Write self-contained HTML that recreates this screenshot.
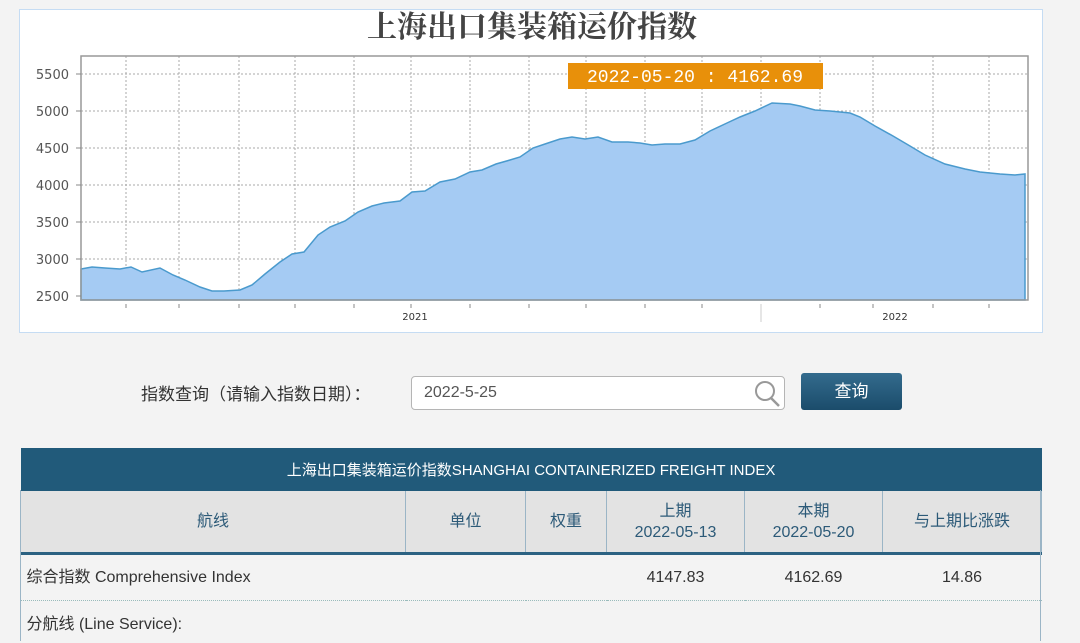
<!DOCTYPE html>
<html><head><meta charset="utf-8"><style>
body{margin:0;width:1080px;height:641px;background:#f3f3f3;overflow:hidden;font-family:"Liberation Sans","Noto Sans CJK SC",sans-serif;color:#333;position:relative}
.abs{position:absolute}
.chart{left:19px;top:9px;width:1022px;height:322px;background:#fff;border:1px solid #c5dcf3}
.lbl{font-size:17px;color:#333;left:141px;top:380px}
.inp{left:411px;top:376px;width:372px;height:32px;border:1px solid #b5b5b5;border-radius:4px;background:#fff;font-size:16px;color:#555;line-height:32px;text-indent:12px}
.btn{left:801px;top:373px;width:101px;height:37px;border-radius:3px;background:linear-gradient(#336b8d,#1b4c6b);color:#fff;font-size:17px;text-align:center;line-height:37px}
table{position:absolute;left:20px;top:448px;width:1021px;border-collapse:collapse;font-size:16px;table-layout:fixed}
td{padding:0;vertical-align:middle}
.th1{background:#215a7a;color:#fff;height:43px;text-align:center;font-size:15px}
.th2 td{background:#e3e3e3;height:61px;text-align:center;border-left:1px solid #9bb5c6;border-bottom:3px solid #2c6282;color:#2c5a78;line-height:21px}
.r td{height:45px;border-bottom:1px dotted #9bb;line-height:20px}
</style></head><body>
<div class="abs chart"></div>
<svg class="abs" style="left:0;top:0" width="1080" height="332">
<text x="532" y="37" text-anchor="middle" font-family="Noto Serif CJK SC,serif" font-size="30" font-weight="bold" fill="#444">上海出口集装箱运价指数</text>
<g stroke="#aaa" stroke-dasharray="2,2" stroke-width="1">
<line x1="81" x2="1028" y1="74" y2="74"/><line x1="81" x2="1028" y1="111" y2="111"/><line x1="81" x2="1028" y1="148" y2="148"/><line x1="81" x2="1028" y1="185" y2="185"/><line x1="81" x2="1028" y1="222" y2="222"/><line x1="81" x2="1028" y1="259" y2="259"/>
<line x1="126" x2="126" y1="56" y2="300"/><line x1="179" x2="179" y1="56" y2="300"/><line x1="239" x2="239" y1="56" y2="300"/><line x1="295" x2="295" y1="56" y2="300"/><line x1="354" x2="354" y1="56" y2="300"/><line x1="411" x2="411" y1="56" y2="300"/><line x1="470" x2="470" y1="56" y2="300"/><line x1="529" x2="529" y1="56" y2="300"/><line x1="586" x2="586" y1="56" y2="300"/><line x1="645" x2="645" y1="56" y2="300"/><line x1="702" x2="702" y1="56" y2="300"/><line x1="761" x2="761" y1="56" y2="300"/><line x1="820" x2="820" y1="56" y2="300"/><line x1="873" x2="873" y1="56" y2="300"/><line x1="933" x2="933" y1="56" y2="300"/><line x1="989" x2="989" y1="56" y2="300"/>
</g>
<polygon fill="#a5cbf3" stroke="#4a9acd" stroke-width="1.5" points="81,269 92,267 105,268 120,269 131,267 142,272 160,268 173,275 185,280 200,287 212,291 224,291 240,290 252,285 265,274 280,262 292,254 304,252 318,235 330,227 345,221 358,212 372,206 384,203 400,201 412,192 425,191 440,182 455,179 470,172 482,170 496,164 510,160 520,157 533,148 545,144 560,139 572,137 585,139 598,137 612,142 628,142 640,143 652,145 665,144 680,144 695,140 710,131 727,123 740,117 755,111 772,103 790,104 800,106 815,110 830,111 850,113 860,117 875,126 893,136 910,146 925,155 945,164 965,169 980,172 1000,174 1015,175 1025,174 1025,300 81,300"/>
<rect x="81" y="56" width="947" height="244" fill="none" stroke="#999" stroke-width="1.5"/>
<g stroke="#888"><line x1="76" x2="81" y1="74" y2="74"/><line x1="76" x2="81" y1="111" y2="111"/><line x1="76" x2="81" y1="148" y2="148"/><line x1="76" x2="81" y1="185" y2="185"/><line x1="76" x2="81" y1="222" y2="222"/><line x1="76" x2="81" y1="259" y2="259"/><line x1="76" x2="81" y1="296" y2="296"/>
<line x1="126" x2="126" y1="304" y2="308"/><line x1="179" x2="179" y1="304" y2="308"/><line x1="239" x2="239" y1="304" y2="308"/><line x1="295" x2="295" y1="304" y2="308"/><line x1="354" x2="354" y1="304" y2="308"/><line x1="411" x2="411" y1="304" y2="308"/><line x1="470" x2="470" y1="304" y2="308"/><line x1="529" x2="529" y1="304" y2="308"/><line x1="586" x2="586" y1="304" y2="308"/><line x1="645" x2="645" y1="304" y2="308"/><line x1="702" x2="702" y1="304" y2="308"/><line x1="761" x2="761" y1="304" y2="322" stroke="#ccc"/><line x1="820" x2="820" y1="304" y2="308"/><line x1="873" x2="873" y1="304" y2="308"/><line x1="933" x2="933" y1="304" y2="308"/><line x1="989" x2="989" y1="304" y2="308"/></g>
<g font-family="DejaVu Sans,sans-serif" font-size="13" fill="#555" text-anchor="end"><text x="69" y="79">5500</text><text x="69" y="116">5000</text><text x="69" y="153">4500</text><text x="69" y="190">4000</text><text x="69" y="227">3500</text><text x="69" y="264">3000</text><text x="69" y="301">2500</text></g>
<g font-family="DejaVu Sans,sans-serif" font-size="10" fill="#333" text-anchor="middle"><text x="415" y="320">2021</text><text x="895" y="320">2022</text></g>
<rect x="568" y="63" width="255" height="26" fill="#e8900a"/>
<text x="695" y="82" text-anchor="middle" font-family="Liberation Mono,monospace" font-size="18" fill="#fff">2022-05-20 : 4162.69</text>
</svg>
<div class="abs lbl">指数查询（请输入指数日期）：</div>
<div class="abs inp">2022-5-25</div>
<svg class="abs" style="left:751px;top:378px" width="32" height="30"><circle cx="14" cy="13" r="9" fill="none" stroke="#999" stroke-width="2"/><line x1="20" y1="20" x2="28" y2="28" stroke="#999" stroke-width="2.5"/></svg>
<div class="abs btn">查询</div>
<table>
<colgroup><col style="width:385px"><col style="width:120px"><col style="width:81px"><col style="width:138px"><col style="width:138px"><col style="width:159px"></colgroup>
<tr><td class="th1" colspan="6">上海出口集装箱运价指数SHANGHAI CONTAINERIZED FREIGHT INDEX</td></tr>
<tr class="th2"><td>航线</td><td>单位</td><td>权重</td><td>上期<br>2022-05-13</td><td>本期<br>2022-05-20</td><td style="border-right:1px solid #9bb5c6">与上期比涨跌</td></tr>
<tr class="r"><td style="padding-left:6px">综合指数 Comprehensive Index</td><td></td><td></td><td style="text-align:center">4147.83</td><td style="text-align:center">4162.69</td><td style="text-align:center">14.86</td></tr>
<tr><td style="padding-left:6px;height:42px">分航线 (Line Service):</td><td></td><td></td><td></td><td></td><td></td></tr>
</table>
<div class="abs" style="left:1040px;top:490px;width:1px;height:151px;background:#9bb5c6"></div>
<div class="abs" style="left:20px;top:490px;width:1px;height:151px;background:#9bb5c6"></div>
</body></html>
